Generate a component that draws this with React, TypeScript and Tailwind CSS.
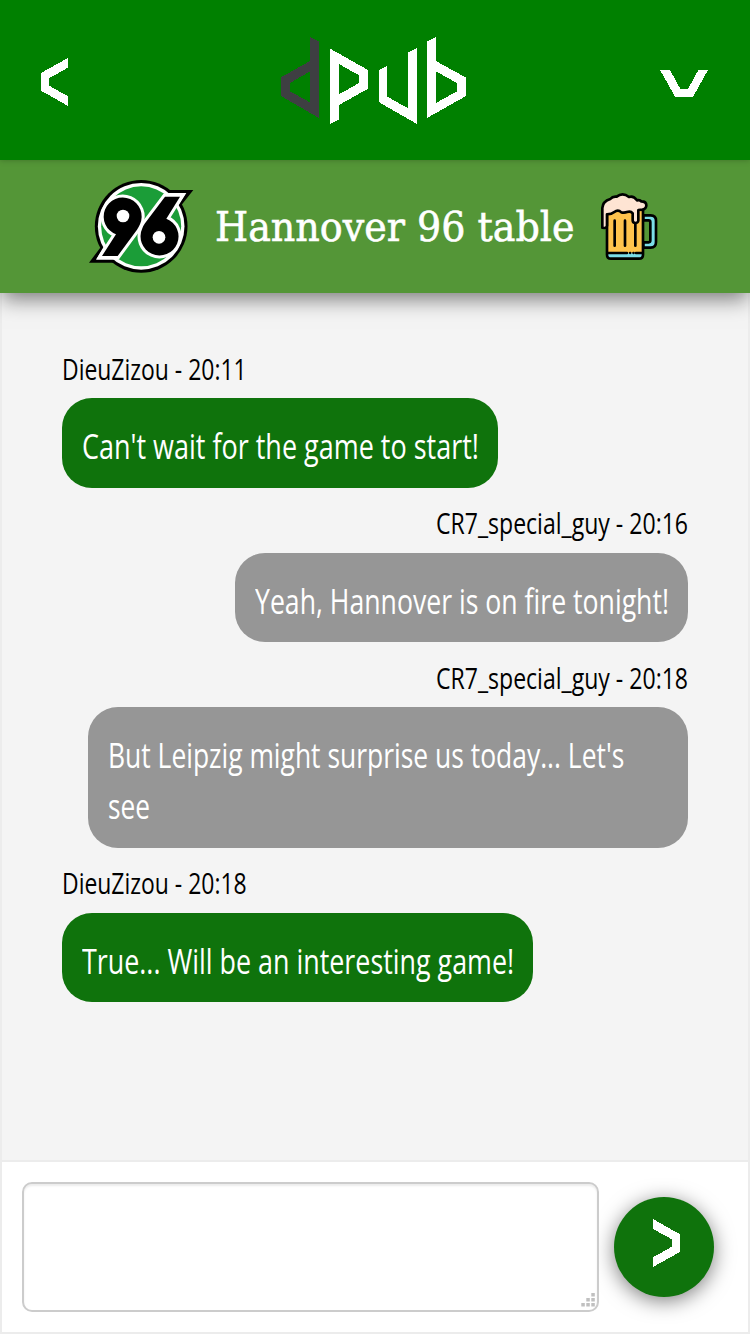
import { useLayoutEffect, useRef } from "react";

type FitProps = { text: string; width: number; right?: boolean };

// Condenses a line of text horizontally to the given width.
function Fit({ text, width, right = false }: FitProps) {
  const ref = useRef<HTMLSpanElement>(null);
  useLayoutEffect(() => {
    const el = ref.current;
    if (el) el.style.transform = `scaleX(${width / el.offsetWidth})`;
  }, [text, width]);
  return (
    <span className={`flex ${right ? "justify-end" : "justify-start"}`} style={{ width }}>
      <span ref={ref} className={`inline-block shrink-0 whitespace-nowrap ${right ? "origin-right" : "origin-left"}`}>
        {text}
      </span>
    </span>
  );
}

type Message = { author: string; authorWidth: number; mine: boolean; box: string; lines: [string, number][] };

const messages: Message[] = [
  { author: "DieuZizou - 20:11", authorWidth: 185, mine: false, box: "w-[436px]", lines: [["Can't wait for the game to start!", 397]] },
  { author: "CR7_special_guy - 20:16", authorWidth: 252, mine: true, box: "w-[453px]", lines: [["Yeah, Hannover is on fire tonight!", 414]] },
  { author: "CR7_special_guy - 20:18", authorWidth: 252, mine: true, box: "w-[600px]", lines: [["But Leipzig might surprise us today... Let's", 516], ["see", 42]] },
  { author: "DieuZizou - 20:18", authorWidth: 185, mine: false, box: "w-[471px]", lines: [["True... Will be an interesting game!", 432]] },
];

function Logo() {
  return (
    <svg viewBox="0 0 630 330" className="h-[110px] w-[210px]" shapeRendering="crispEdges" fillRule="evenodd" fill="#fff" aria-label="dpub">
      <path fill="#3e3f42" d="M120 36L147 50V279L33 213V157L120 108ZM120 139L60 174V199L120 232Z" />
      <path d="M179 70L294 135V191L207 240V283L179 297ZM207 117V208L267 174V151Z" />
      <path d="M326 135L352 123V215L414 250V83L441 69V297L326 231Z" />
      <path d="M471 50L498 36V108L588 158V213L471 279ZM498 139V234L561 199V174Z" />
    </svg>
  );
}

function Crest() {
  const nine = "M66 273L108 208A57 57 0 1 1 180 178Q176 187 171 194L113 273Z";
  const six = "M300 95L259 161A57 57 0 1 1 187 190Q190 182 195 175L255 95Z";
  return (
    <svg viewBox="0 0 375 405" className="h-[135px] w-[125px]">
      <circle cx="183.500" cy="184" r="139" />
      <path d="M260 75H340L298 128ZM107 293H27L67 240Z" />
      <circle cx="183.500" cy="184" r="130" fill="#fff" />
      <path fill="#fff" d="M249 84H319L285 138ZM118 284H48L80 230Z" />
      <circle cx="183.500" cy="184" r="120" fill="#1b9d38" />
      <path d={nine} fill="#fff" stroke="#fff" strokeWidth="18" />
      <path d={six} fill="#fff" stroke="#fff" strokeWidth="18" />
      <path d={nine} />
      <path d={six} />
      <circle cx="129" cy="153" r="19" fill="#fff" />
      <circle cx="237" cy="217" r="19" fill="#fff" />
    </svg>
  );
}

function Beer() {
  return (
    <svg viewBox="0 0 240 270" className="h-[90px] w-[80px]" strokeLinecap="round" strokeLinejoin="round">
      <path d="M160 106H182Q198 106 198 122V186Q198 203 182 203H160V187H176Q181 187 181 181V127Q181 121 176 121H160Z" fill="#7bdde8" stroke="#000" strokeWidth="8" />
      <path d="M51 88H159V225Q159 236 147 236H63Q51 236 51 225Z" fill="#ffc34d" />
      <path d="M51 219H159V225Q159 236 147 236H63Q51 236 51 225Z" fill="#7bdde8" />
      <path d="M51 100V224Q51 236 63 236H147Q159 236 159 224V90M53 219H111M138 219H157" fill="none" stroke="#000" strokeWidth="8" />
      <path d="M120 219H121M130 219H131" stroke="#000" strokeWidth="7" />
      <path d="M74 122V197M105 122V197M136 122V197" stroke="#000" strokeWidth="8" />
      <path d="M37 143V84Q38 64 61 57Q68 48 80 50Q98 36 117 51Q130 46 141 61Q150 59 154 64Q169 64 169 76Q169 87 157 89L145 90V122Q144 129 136 129Q128 129 128 121V100Q122 92 111 96Q104 99 94 97Q84 87 73 96Q65 103 51 103V137Q50 144 43 144Z" fill="#fee4d3" stroke="#000" strokeWidth="8" />
    </svg>
  );
}

export default function App() {
  return (
    <div className="flex h-[1334px] w-[750px] flex-col overflow-hidden bg-[#f4f4f4] font-['Open_Sans',sans-serif]">
      <header className="z-20 flex h-[160px] shrink-0 items-start justify-between bg-[#008000] shadow-[0_0_6px_rgba(0,0,0,0.25)]">
        <button className="ml-5 mt-10 h-20 w-20" aria-label="Back">
          <svg viewBox="0 0 240 240" className="h-20 w-20" shapeRendering="crispEdges">
            <path fill="#fff" d="M144 54V83L87 115V137L144 169V198L63 152V99Z" />
          </svg>
        </button>
        <div className="mr-auto ml-[170px] mt-[25px]"><Logo /></div>
        <button className="mr-[10px] mt-10 h-20 w-[100px]" aria-label="Open menu">
          <svg viewBox="0 0 300 240" className="h-20 w-[100px]" shapeRendering="crispEdges">
            <path fill="#fff" d="M60 90H90L121 147H144L175 90H204L159 171H106Z" />
          </svg>
        </button>
      </header>

      <div className="z-10 flex h-[133px] shrink-0 items-start bg-[#549637] pl-20 shadow-[0_8px_20px_-2px_rgba(0,0,0,0.5)]">
        <div className="mt-[5px]"><Crest /></div>
        <h1 className="ml-[10px] mt-[37px] font-['DejaVu_Serif',serif] text-[41px] leading-[60px] text-white [-webkit-text-stroke:0.6px_white]">
          <Fit text="Hannover 96 table" width={360} />
        </h1>
        <div className="ml-[15px] mt-5"><Beer /></div>
      </div>

      <main className="flex h-[867px] shrink-0 flex-col border-x-2 border-[#ececec] px-[60px] pt-[40.6px]">
        {messages.map((m, i) => (
          <div key={i} className={`flex flex-col ${m.mine ? "items-end" : "items-start"}`}>
            <div className="h-[64.9px] pt-[14.6px] text-[29px] leading-[42px] text-black">
              <Fit text={m.author} width={m.authorWidth} right={m.mine} />
            </div>
            <div className={`${m.box} ${m.mine ? "bg-[#969696]" : "bg-[#0f730c]"} rounded-[30px] px-5 pb-[16px] pt-[22px] text-[35px] leading-[51.4px] text-white`}>
              {m.lines.map(([text, width]) => (
                <Fit key={text} text={text} width={width} />
              ))}
            </div>
          </div>
        ))}
      </main>

      <footer className="flex h-[174px] shrink-0 items-start border-2 border-[#ececec] bg-white pl-5 pt-5">
        <div className="relative h-[130px] w-[577px]">
          <textarea aria-label="Message" className="block h-[130px] w-[577px] resize-none rounded-[10px] border-2 border-[#ccc] bg-white p-3 text-[30px] shadow-[inset_0_2px_2px_rgba(0,0,0,0.075)] outline-none" />
          <svg viewBox="0 0 14 14" className="absolute bottom-[5px] right-[4px] h-[14px] w-[14px]" fill="#c0c0c0">
            <path d="M10.300 0h3.500v3.500h-3.500zM5.300 5h3.500v3.500h-3.500zM10.300 5h3.500v3.500h-3.500zM.3 10h3.500v3.500h-3.500zM5.300 10h3.500v3.500h-3.500zM10.300 10h3.500v3.500h-3.500z" />
          </svg>
        </div>
        <button aria-label="Send" className="ml-[15px] mt-[15px] h-[100px] w-[100px] rounded-full bg-[#0f730c] shadow-[0_4px_20px_rgba(0,0,0,0.5)]">
          <svg viewBox="0 0 300 300" className="h-[100px] w-[100px]" shapeRendering="crispEdges">
            <path fill="#fff" d="M117 66L198 112V165L117 210V181L174 149V127L117 96Z" />
          </svg>
        </button>
      </footer>
    </div>
  );
}
